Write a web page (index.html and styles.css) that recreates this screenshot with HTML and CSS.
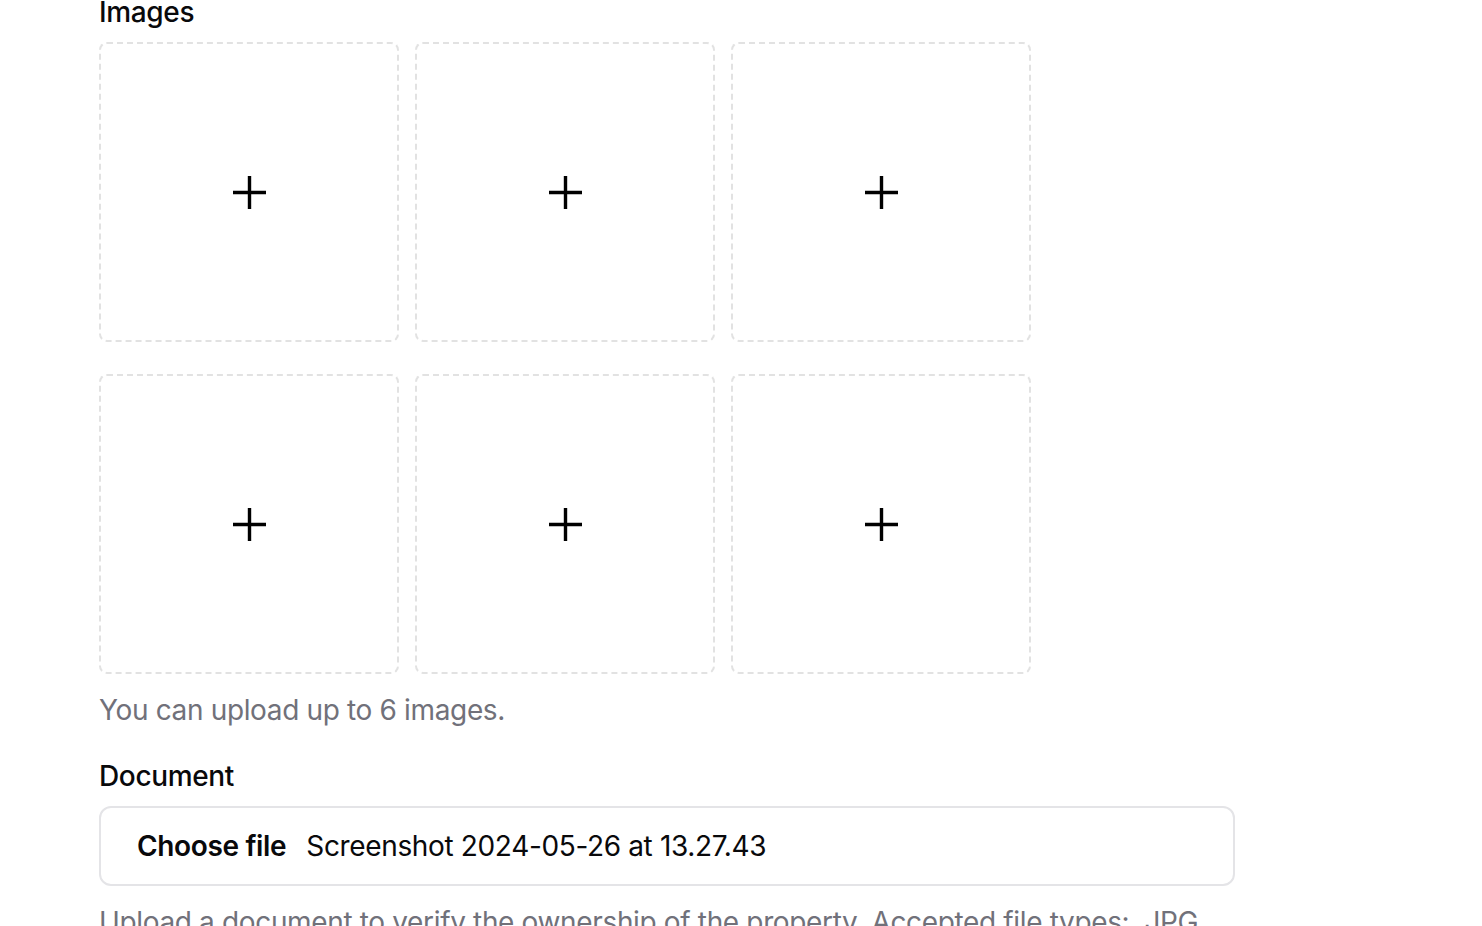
FILE: index.html
```html
<!DOCTYPE html>
<html lang="en">
<head>
<meta charset="utf-8">
<title>Upload</title>
<link rel="stylesheet" href="styles.css">
</head>
<body>
<div class="page">
  <div class="field">
    <div class="label">Images</div>
    <div class="grid">
      <button class="slot" type="button"><svg class="plus" viewBox="0 0 33 33" width="33" height="33"><path d="M16.5 0v33M0 16.5h33" stroke="#000" stroke-width="3.4" fill="none"/></svg></button>
      <button class="slot" type="button"><svg class="plus" viewBox="0 0 33 33" width="33" height="33"><path d="M16.5 0v33M0 16.5h33" stroke="#000" stroke-width="3.4" fill="none"/></svg></button>
      <button class="slot" type="button"><svg class="plus" viewBox="0 0 33 33" width="33" height="33"><path d="M16.5 0v33M0 16.5h33" stroke="#000" stroke-width="3.4" fill="none"/></svg></button>
      <button class="slot" type="button"><svg class="plus" viewBox="0 0 33 33" width="33" height="33"><path d="M16.5 0v33M0 16.5h33" stroke="#000" stroke-width="3.4" fill="none"/></svg></button>
      <button class="slot" type="button"><svg class="plus" viewBox="0 0 33 33" width="33" height="33"><path d="M16.5 0v33M0 16.5h33" stroke="#000" stroke-width="3.4" fill="none"/></svg></button>
      <button class="slot" type="button"><svg class="plus" viewBox="0 0 33 33" width="33" height="33"><path d="M16.5 0v33M0 16.5h33" stroke="#000" stroke-width="3.4" fill="none"/></svg></button>
    </div>
    <p class="hint hint-images">You can upload up to 6 images.</p>
  </div>
  <div class="field">
    <div class="label">Document</div>
    <div class="file-input">
      <span class="file-btn">Choose file</span>
      <span class="file-name">Screenshot 2024-05-26 at 13.27.43</span>
    </div>
    <p class="hint hint-doc">Upload a document to verify the ownership of the property. Accepted file types:&nbsp; JPG, PNG, PDF.</p>
  </div>
</div>
</body>
</html>
```

FILE: styles.css
```css
html, body {
  margin: 0;
  padding: 0;
  background: #ffffff;
  overflow: hidden;
}
body {
  font-family: Inter, "Noto Sans", "Liberation Sans", sans-serif;
  color: #09090b;
  letter-spacing: -0.35px;
}
.page {
  padding-left: 99px;
  margin-top: -8px;
  width: 1136px;
}
.label {
  font-size: 28px;
  line-height: 40px;
  font-weight: 500;
  margin-bottom: 10px;
}
.grid {
  display: grid;
  grid-template-columns: repeat(3, 300px);
  grid-auto-rows: 300px;
  column-gap: 16px;
  row-gap: 32px;
}
.slot {
  box-sizing: border-box;
  border: 2px dashed #e2e2e2;
  border-radius: 8px;
  background: #fff;
  display: flex;
  align-items: center;
  justify-content: center;
  padding: 0;
  margin: 0;
}
.plus {
  display: block;
}
.hint {
  margin: 0;
  font-size: 28px;
  line-height: 40px;
  color: #71717a;
}
.hint-images {
  margin-top: 16px;
  margin-bottom: 26px;
}
.file-input {
  box-sizing: border-box;
  height: 80px;
  border: 2px solid #e4e4e7;
  border-radius: 12px;
  display: flex;
  align-items: center;
  padding-left: 36px;
  gap: 20px;
  font-size: 28px;
  color: #09090b;
}
.file-btn {
  font-weight: 600;
}
.file-name {
  font-weight: 400;
}
.hint-doc {
  margin-top: 16px;
}
```
